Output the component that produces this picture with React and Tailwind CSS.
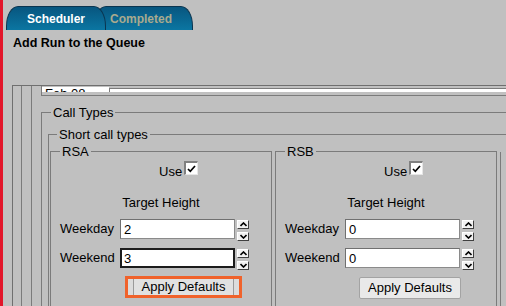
import React from 'react'

// Spinner buttons next to a number field
function SpinBtn({ up }) {
    return (
        <div className="w-[12px] h-[9px] bg-[#f2f2f2] border border-t-white border-l-white border-b-[#404040] border-r-[#404040] flex items-center justify-center">
            <svg width="7" height="5" viewBox="0 0 7 5">
                {up ? (
                    <polyline points="0.5,4 3.5,1 6.5,4" fill="none" stroke="#000" strokeWidth="1.6" />
                ) : (
                    <polyline points="0.5,1 3.5,4 6.5,1" fill="none" stroke="#000" strokeWidth="1.6" />
                )}
            </svg>
        </div>
    )
}

function Spinner() {
    return (
        <div className="ml-[2px] mt-[1px] flex flex-col gap-[3px]">
            <SpinBtn up />
            <SpinBtn />
        </div>
    )
}

function FieldRow({ label, value, focused, className }) {
    return (
        <div className={`flex items-start h-[20px] ${className}`}>
            <span className="w-[60px] leading-[20px]">{label}</span>
            <input
                readOnly
                value={value}
                className={
                    focused
                        ? 'w-[115px] h-[20px] bg-white px-[2px] text-[13px] text-black outline-none border-2 border-[#1c1c1c]'
                        : 'w-[115px] h-[20px] bg-white px-[3px] text-[13px] text-black outline-none border border-[#8a8a8a] border-t-[#707070] border-l-[#707070]'
                }
            />
            <Spinner />
        </div>
    )
}

function CheckBox() {
    return (
        <div className="ml-[2px] mt-[2px] w-[14px] h-[14px] bg-white border-t-2 border-l-2 border-[#808080] border-r border-b border-r-[#e6e6e6] border-b-[#e6e6e6] flex items-center justify-center">
            <svg width="9" height="8" viewBox="0 0 9 8">
                <polyline points="1,4 3.3,6.3 8,1" fill="none" stroke="#000" strokeWidth="1.7" />
            </svg>
        </div>
    )
}

function CallGroup({ name, weekday, weekend, active }) {
    return (
        <fieldset className="w-[222px] shrink-0 border border-[#7b7b7b] pl-[9px] pr-[9px] pb-[30px]">
            <legend className="px-[2px] leading-[15px]">{name}</legend>
            <div className="flex items-start h-[19px] pl-[99px]">
                <span className="mt-[5px] leading-[15px]">Use</span>
                <CheckBox />
            </div>
            <div className="mt-[17px] text-center leading-[15px]">Target Height</div>
            <FieldRow className="mt-[9px]" label="Weekday" value={weekday} />
            <FieldRow className="mt-[9px]" label="Weekend" value={weekend} focused={active} />
            {active ? (
                <div className="mt-[8px] ml-[65px] inline-flex border-[3px] border-[#f0622b] bg-[#dcdcdc] px-[5px]">
                    <button className="w-[101px] h-[16px] border-x border-[#9a9a9a] bg-[#e1e1e1] text-[13px] leading-[16px] text-black">
                        Apply Defaults
                    </button>
                </div>
            ) : (
                <div className="mt-[9px] ml-[74px]">
                    <button className="w-[102px] h-[22px] rounded-[2px] border border-[#a3a3a3] bg-[#e9e9e9] text-[13px] leading-[20px] text-black">
                        Apply Defaults
                    </button>
                </div>
            )}
        </fieldset>
    )
}

export default function App() {
    return (
        <div className="w-[506px] h-[306px] overflow-hidden bg-[#c0c0c0] flex font-['Liberation_Sans',Arial,sans-serif] text-[13px] text-black">
            {/* red edge */}
            <div className="w-[3px] shrink-0 bg-[#e2162a]" />

            <div className="flex-1 flex flex-col min-w-0">
                <div className="h-[3px] w-[94px] ml-[121px] bg-[#d6d6d6]" />

                {/* Tabs */}
                <div className="ml-[3px] mt-[6px] flex h-[24px]">
                    <div className="relative z-10 w-[100px] h-[24px] rounded-tl-[12px_20px] rounded-tr-[12px_20px] border border-b-0 border-[#0b3550] bg-linear-to-b from-[#08567f] to-[#0b76a2] text-center text-white font-bold text-[12px] leading-[15px] pt-[5px]">
                        Scheduler
                    </div>
                    <div className="-ml-[12px] w-[99px] h-[24px] rounded-tl-[12px_20px] rounded-tr-[12px_20px] border border-b-0 border-[#0b3550] bg-linear-to-b from-[#08567f] to-[#0b76a2] text-[12px] font-bold leading-[15px] pt-[5px] pl-[15px]">
                        <span className="text-[#a9aa8e]">Completed</span>
                    </div>
                </div>

                <div className="ml-[10px] mt-[6px] font-bold text-[12.5px] leading-[15px]">Add Run to the Queue</div>

                {/* Scrolled form area */}
                <div className="ml-[9px] mt-[34px] w-[700px] border-l border-t border-[#6f6f6f] pl-[8px] flex-1">
                    <div className="h-full border-l border-[#7b7b7b] pl-[9px]">
                        <div className="h-full border-l border-[#7b7b7b] pl-[9px]">
                            {/* bottom of the date row, cut off by the scroll */}
                            <div className="h-[10px] border-l border-b border-[#7b7b7b] flex">
                                <div className="w-[67px] h-[5px] mt-[1px] bg-white overflow-hidden pl-[3px] leading-[13px] text-[13px]">
                                    Feb 08
                                </div>
                                <div className="w-[560px] h-[4px] mt-[2px] bg-white border-t border-l border-[#7b7b7b]" />
                            </div>

                            <fieldset className="mt-[9px] w-[620px] border border-[#7b7b7b] pl-[6px] pt-[7px] pb-[20px]">
                                <legend className="ml-[3px] px-[2px] leading-[15px]">Call Types</legend>
                                <fieldset className="border border-[#7b7b7b] pl-[1px] pt-[2px] pb-[20px]">
                                    <legend className="ml-[7px] px-[2px] leading-[15px]">Short call types</legend>
                                    <div className="flex gap-[3px]">
                                        <CallGroup name="RSA" weekday="2" weekend="3" active />
                                        <CallGroup name="RSB" weekday="0" weekend="0" />
                                        <div className="w-[200px] mt-[8px] border-l border-[#7b7b7b]" />
                                    </div>
                                </fieldset>
                            </fieldset>
                        </div>
                    </div>
                </div>
            </div>
        </div>
    )
}
